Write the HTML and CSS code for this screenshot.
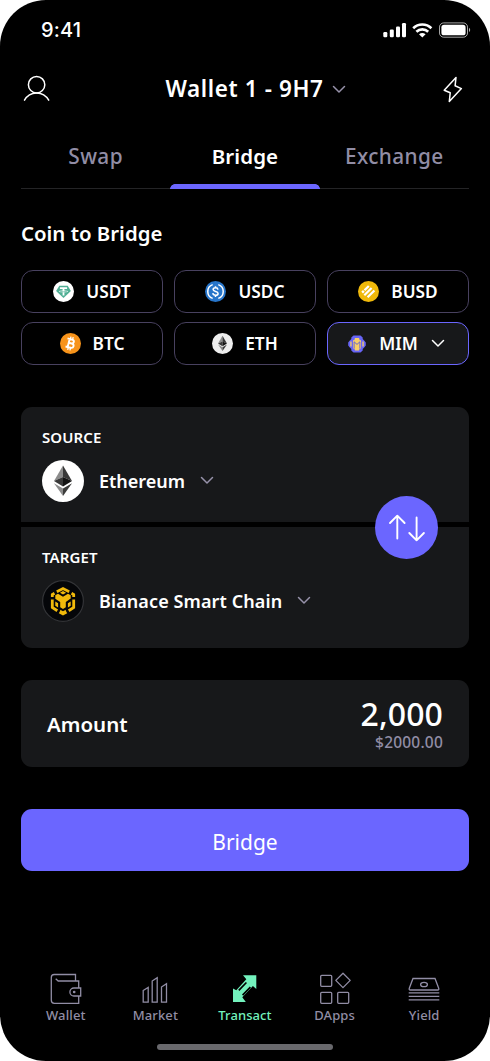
FILE: index.html
```html
<!DOCTYPE html>
<html lang="en">
<head>
<meta charset="utf-8">
<title>Bridge</title>
<link rel="stylesheet" href="styles.css">
</head>
<body>
<svg class="defs" width="0" height="0">
  <symbol id="eth" viewBox="0 0 42 42">
    <path fill="#8c8c8c" d="M21 5.5 12 21l9-4z"/><path fill="#393939" d="M21 5.5V17l9 4z"/>
    <path fill="#393939" d="M12 21l9-4v9.5z"/><path fill="#141414" d="M30 21l-9-4v9.5z"/>
    <path fill="#8c8c8c" d="M12 23.2l9 5.2V36z"/><path fill="#3c3c3b" d="M30 23.2l-9 5.2V36z"/>
  </symbol>
  <symbol id="chev" viewBox="0 0 14 9"><path d="M1.5 1.5 7 7l5.5-5.5" fill="none" stroke="currentColor" stroke-width="1.5" stroke-linecap="round" stroke-linejoin="round"/></symbol>
</svg>
<div class="phone">
  <header class="status">
    <span class="time">9:41</span>
    <svg class="signals" width="90" height="18" viewBox="382 21 90 18">
      <g fill="#fff"><rect x="383.3" y="32" width="4" height="5.3" rx="1.2"/><rect x="389.8" y="29.5" width="4" height="7.8" rx="1.2"/><rect x="396" y="26.5" width="4" height="10.8" rx="1.2"/><rect x="402" y="23" width="4" height="14.3" rx="1.2"/></g>
      <g fill="none" stroke="#fff" stroke-width="2.6"><path d="M413.2 28.2a13 13 0 0 1 18.2 0"/><path d="M416.4 31.8a8.5 8.5 0 0 1 11.8 0"/></g>
      <path fill="#fff" d="M419 34.2q3.3-2.6 6.6 0l-3.3 3.3z"/>
      <rect x="439.5" y="22.9" width="28" height="14.3" rx="4.2" fill="none" stroke="#fff" stroke-opacity=".65"/>
      <rect x="441.4" y="24.8" width="24.2" height="10.5" rx="2.6" fill="#fff"/><path d="M469 27.8q2.4 2.2 0 4.4z" fill="#fff" fill-opacity=".7"/>
    </svg>
  </header>
  <div class="topbar">
    <svg class="user" width="28" height="28" viewBox="0 0 28 28" fill="none" stroke="#fff" stroke-width="1.5" stroke-linecap="round"><circle cx="14.6" cy="9.7" r="8.2"/><path d="M2.500 25.200C5 20.500 9.300 17.900 14.600 17.900s9.500 2.600 12.100 7.300"/></svg>
    <h1 class="wallet"><span>Wallet 1 - 9H7</span><svg width="14" height="9"><use href="#chev"/></svg></h1>
    <svg class="bolt" width="20" height="27" viewBox="0 0 20 27" fill="none" stroke="#fff" stroke-width="1.5" stroke-linejoin="round"><path d="M13 1.400 1.200 14.200 7.200 16.800 6.300 25.500 18.400 12.600 12.100 9.800z"/></svg>
  </div>
  <nav class="tabs"><a>Swap</a><a class="on">Bridge</a><a>Exchange</a></nav>
  <h2 class="heading">Coin to Bridge</h2>
  <div class="coins">
    <div class="coin"><svg width="21" height="21" viewBox="0 0 21 21"><circle cx="10.500" cy="10.500" r="10.500" fill="#fff"/><path d="M6.300 4.800h8.400l3.200 5.100-7.400 7-7.400-7z" fill="#50af95"/><path d="M6.900 6.300h7.200v1.800h-2.700v1.300c5 .2 5 1.700 0 1.900v3.200H9.600v-3.200c-5-.2-5-1.700 0-1.900V8.100H6.900z" fill="#fff"/><path d="M6.700 10.300q3.800 1 7.600 0" stroke="#50af95" stroke-width=".7" fill="none"/></svg><span>USDT</span></div>
    <div class="coin"><svg width="21" height="21" viewBox="0 0 21 21"><circle cx="10.500" cy="10.500" r="10.500" fill="#2775ca"/><g fill="none" stroke="#fff" stroke-width="1.500"><path d="M7.700 3.600a7.300 7.300 0 0 0 0 13.800M13.300 3.600a7.300 7.300 0 0 1 0 13.800"/><path d="M13 8.600c-.2-1.300-1.200-1.800-2.500-1.800-1.500 0-2.400.7-2.400 1.800 0 2.500 5 1.200 5 3.800 0 1.200-1.100 1.900-2.600 1.900s-2.500-.7-2.700-2.100M10.500 5.200v1.600m0 7.500v1.600"/></g></svg><span>USDC</span></div>
    <div class="coin"><svg width="21" height="21" viewBox="0 0 21 21"><circle cx="10.500" cy="10.500" r="10.500" fill="#f0b90b"/><g stroke="#fff" stroke-width="2.200"><path d="M6.500 9.300l4.300-4.300M6.300 14.300l7.300-7.300M9.600 16.300l6.800-6.800"/></g><path d="M5 9.100l1.700 1.700L5 12.500l-1.700-1.700z" fill="#fff"/></svg><span>BUSD</span></div>
    <div class="coin"><svg width="21" height="21" viewBox="0 0 21 21"><circle cx="10.500" cy="10.500" r="10.500" fill="#f7931a"/><g transform="rotate(14 10.500 10.500)" fill="none" stroke="#fff"><path stroke-width="1.900" d="M6.400 6.300h4.700c3 0 3 3.900 0 3.900H8.600h3c3.300 0 3.300 4.400 0 4.400H6.400M8.600 6.300v8.300"/><path stroke-width="1.300" d="M9.300 3.700v2.500m2.300-2.500v2.500M9.300 14.700v2.600m2.300-2.600v2.600"/></g></svg><span>BTC</span></div>
    <div class="coin"><svg width="21" height="21" viewBox="0 0 42 42"><circle cx="21" cy="21" r="21" fill="#eee"/><use href="#eth" width="42" height="42"/></svg><span>ETH</span></div>
    <div class="coin sel"><svg width="18" height="18" viewBox="0 0 18 18"><path d="M5.500.4h7l2.200 2.200v1.500l1.500 1.500 1.600 1.800v3.200l-1.600 1.800-1.500 1.500v1.500l-2.200 2.200h-7l-2.200-2.200v-1.500l-1.500-1.500L.2 10.600V7.400l1.600-1.800 1.500-1.500V2.600z" fill="#6865f6"/><path d="M2.300 6.500h1.300v5H2.300zm12.100 0h1.300v5h-1.300z" fill="#f8cf68"/><path d="M5 5.200h1.300L7 3h4l.7 2.200H13v8.400h-1.500L11 15.500H7l-.5-1.900H5z" fill="#f8cf68"/><path d="M6.100 13.400V6.800L9 9.400l2.900-2.600v6.600" fill="none" stroke="#6865d0" stroke-width="1"/></svg><span>MIM</span><svg class="down" width="14" height="9"><use href="#chev"/></svg></div>
  </div>
  <section class="route">
    <div class="leg"><h3>SOURCE</h3><div class="chain"><svg width="42" height="42" viewBox="0 0 42 42"><circle cx="21" cy="21" r="21" fill="#fff"/><use href="#eth" width="42" height="42"/></svg><span>Ethereum</span><svg class="down" width="14" height="9"><use href="#chev"/></svg></div></div>
    <div class="leg"><h3>TARGET</h3><div class="chain"><svg width="42" height="42" viewBox="0 0 42 42"><circle cx="21" cy="21" r="20.400" fill="#050609" stroke="#333437" stroke-width="1.200"/><g fill="none" stroke="#f0b90b" stroke-width="2.800"><path d="M14.800 11.700 21 8.500l6.200 3.200"/><path d="M10.300 17v-2.500l2.200-1.300M31.700 17v-2.500l-2.200-1.300M10.300 19.500v8l5 3.200M31.700 19.500v8l-5 3.200M17.500 32l3.500 2 3.500-2"/></g><path d="M18 12.700l3-1.800 3 1.800-3 1.800zM13.300 15.300l2.700-1.600 5 3 5-3 2.700 1.600v3.300L23.800 22v5.200L21 29l-2.800-1.800V22l-4.900-3.300zM13.300 21.500l2.800 1.700v4.300l-2.800-1.700zM28.700 21.500l-2.800 1.700v4.300l2.800-1.700zM18.200 29.700 21 31.300l2.800-1.600v2.500L21 34l-2.800-1.800z" fill="#f0b90b"/></svg><span class="long">Bianace Smart Chain</span><svg class="down" width="14" height="9"><use href="#chev"/></svg></div></div>
    <button class="flip"><svg width="63" height="63" viewBox="0 0 63 63" fill="none" stroke="#fff" stroke-width="1.900" stroke-linecap="round" stroke-linejoin="round"><path d="M22.300 42.500V19.700M15 27l7.300-7.300 7.300 7.300M41.600 21.500v22.700M34.300 37l7.300 7.300 7.300-7.300"/></svg></button>
  </section>
  <section class="amount"><span class="label">Amount</span><div class="values"><strong>2,000</strong><small>$2000.00</small></div></section>
  <button class="cta">Bridge</button>
  <nav class="bottom">
    <a><svg width="34" height="34" viewBox="0 0 34 34"><path d="M26.500 8.500V2.500H5.200a3 3 0 0 0-2.900 3v22.800a3 3 0 0 0 3 3h24.400v-7.300M29.700 16V9H9.200L6.700 6.700M31.700 16h-6.800a4 4 0 0 0 0 8h6.800z"/><circle cx="25.200" cy="20" r=".7"/></svg><span>Wallet</span></a>
    <a><svg width="34" height="34" viewBox="0 0 34 34"><path d="M5.200 18.500l5-3v14.700h-5zM14.200 9l5-3.300v24.500h-5zM23.500 15l5-3.300v18.500h-5z"/></svg><span>Market</span></a>
    <a class="act"><svg width="34" height="34" viewBox="0 0 34 34"><path d="M15 3.300H28.300V17L24.900 14 14.300 25.300 17.800 30H5V16.500L8.300 18.300 18.300 7.200z"/><path class="cut" d="M10.800 18.400l7.600-7.900M14.600 23.200l7.800-8.100"/></svg><span>Transact</span></a>
    <a><svg width="34" height="34" viewBox="0 0 34 34"><rect x="2.700" y="3.300" width="11" height="11" rx="1"/><path d="M25 1.200l7.200 7.200-7.200 7.200-7.200-7.200z" stroke-linejoin="round"/><rect x="2.700" y="20.300" width="11" height="11" rx="1"/><rect x="19.700" y="20.300" width="11" height="11" rx="1"/></svg><span>DApps</span></a>
    <a><svg width="34" height="34" viewBox="0 0 34 34"><path d="M6 6.500h22l3.700 9.800q.5 1.700-1 1.700H3.300q-1.500 0-1-1.700zM1.700 20.800h30.600M1.700 24.300h30.600M1.700 27.800h30.600"/><ellipse cx="17" cy="12.500" rx="3.400" ry="2.200"/></svg><span>Yield</span></a>
  </nav>
  <div class="home"></div>
</div>
</body>
</html>
```
FILE: styles.css
```css
* { box-sizing: border-box; }
body { margin: 0; background: #fff; font-family: "Noto Sans", sans-serif; color: #fff; }
.defs { position: absolute; }
svg { display: block; flex: none; }
h1, h2, h3 { margin: 0; }
button { border: 0; padding: 0; color: #fff; font-family: inherit; }
.phone { width: 490px; height: 1061px; padding: 0 21px; background: #000; border-radius: 46px; overflow: hidden; display: flex; flex-direction: column; }
.status { height: 60px; display: flex; justify-content: space-between; align-items: center; padding-left: 20px; margin-right: -3px; }
.time { font: 500 20px/24px Inter, sans-serif; letter-spacing: .2px; }
.topbar { height: 58px; display: flex; align-items: center; justify-content: space-between; padding: 0 6px 0 1px; }
.wallet { display: flex; align-items: center; gap: 9px; margin-left: 19px; font-size: 22.5px; line-height: 30px; font-weight: 600; letter-spacing: .6px; }
.wallet span { margin-top: -1px; }
.wallet svg, .chain .down { color: #9792aa; }
.tabs { height: 71px; display: grid; grid-template-columns: repeat(3, 1fr); border-bottom: 1px solid #242426; font-size: 20.8px; font-weight: 500; letter-spacing: .4px; color: #918da5; text-align: center; line-height: 76px; }
.tabs a { height: 71px; }
.tabs .on { color: #fff; font-weight: 600; font-size: 20.5px; letter-spacing: .1px; background: radial-gradient(circle at 5px 5px, #6b66ff 4.5px, transparent 5.2px) 0 66px / 5px 5px no-repeat, radial-gradient(circle at 0 5px, #6b66ff 4.5px, transparent 5.2px) 100% 66px / 5px 5px no-repeat, linear-gradient(#6b66ff, #6b66ff) 5px 66px / calc(100% - 10px) 5px no-repeat; }
.heading { height: 81px; line-height: 88px; font-size: 20.4px; font-weight: 600; }
.coins { display: grid; grid-template-columns: repeat(3, 1fr); gap: 9px 11px; }
.coin { height: 43px; border: 1px solid #48415f; border-radius: 12px; display: flex; align-items: center; justify-content: center; gap: 12px; font-size: 17.3px; font-weight: 600; }
.sel { border-color: #6b66ff; background: #17181a; gap: 13px; padding-right: 3px; }
.route { position: relative; margin-top: 42px; display: grid; gap: 5px; border-radius: 11px; overflow: hidden; }
.leg { height: 115px; padding: 19px 21px 0; background: #17181a; }
.leg + .leg { height: 121px; }
.leg h3 { font-size: 15px; line-height: 23px; font-weight: 600; letter-spacing: .1px; margin-bottom: 11px; }
.chain { display: flex; align-items: center; font-size: 18px; font-weight: 600; }
.chain span { margin: 0 15px; }
.chain .long { letter-spacing: .1px; }
.chain .down { margin-top: -2px; }
.flip { position: absolute; right: 31px; top: 89px; width: 63px; height: 63px; border-radius: 50%; background: #6b66ff; }
.amount { height: 87px; margin-top: 32px; padding: 1px 26px 0; display: flex; align-items: center; justify-content: space-between; background: #17181a; border-radius: 11px; }
.label { font-size: 20.5px; font-weight: 600; margin-top: -1px; }
.values { display: flex; flex-direction: column; align-items: flex-end; }
.values strong { font-size: 32px; line-height: 36px; font-weight: 550; letter-spacing: .1px; }
.values small { font-size: 15.5px; line-height: 20px; font-weight: 550; letter-spacing: .2px; color: #918da5; }
.cta { height: 62px; flex: none; margin-top: 42px; padding-top: 3px; border-radius: 11px; background: #6b66ff; font-size: 21px; }
.bottom { margin-top: 101px; display: grid; grid-template-columns: repeat(5, 1fr); }
.bottom a { display: flex; flex-direction: column; align-items: center; font-size: 13px; line-height: 18px; font-weight: 500; letter-spacing: .1px; color: #918da5; }
.bottom svg { fill: none; stroke: currentColor; stroke-width: 1.3; }
.bottom .act { color: #73f2bd; }
.bottom .act svg { fill: currentColor; stroke: none; }
.act .cut { stroke: #000; stroke-width: 1.7; }
.home { width: 176px; height: 6px; margin: 20px auto 0; border-radius: 3px; background: #69696d; }
```
